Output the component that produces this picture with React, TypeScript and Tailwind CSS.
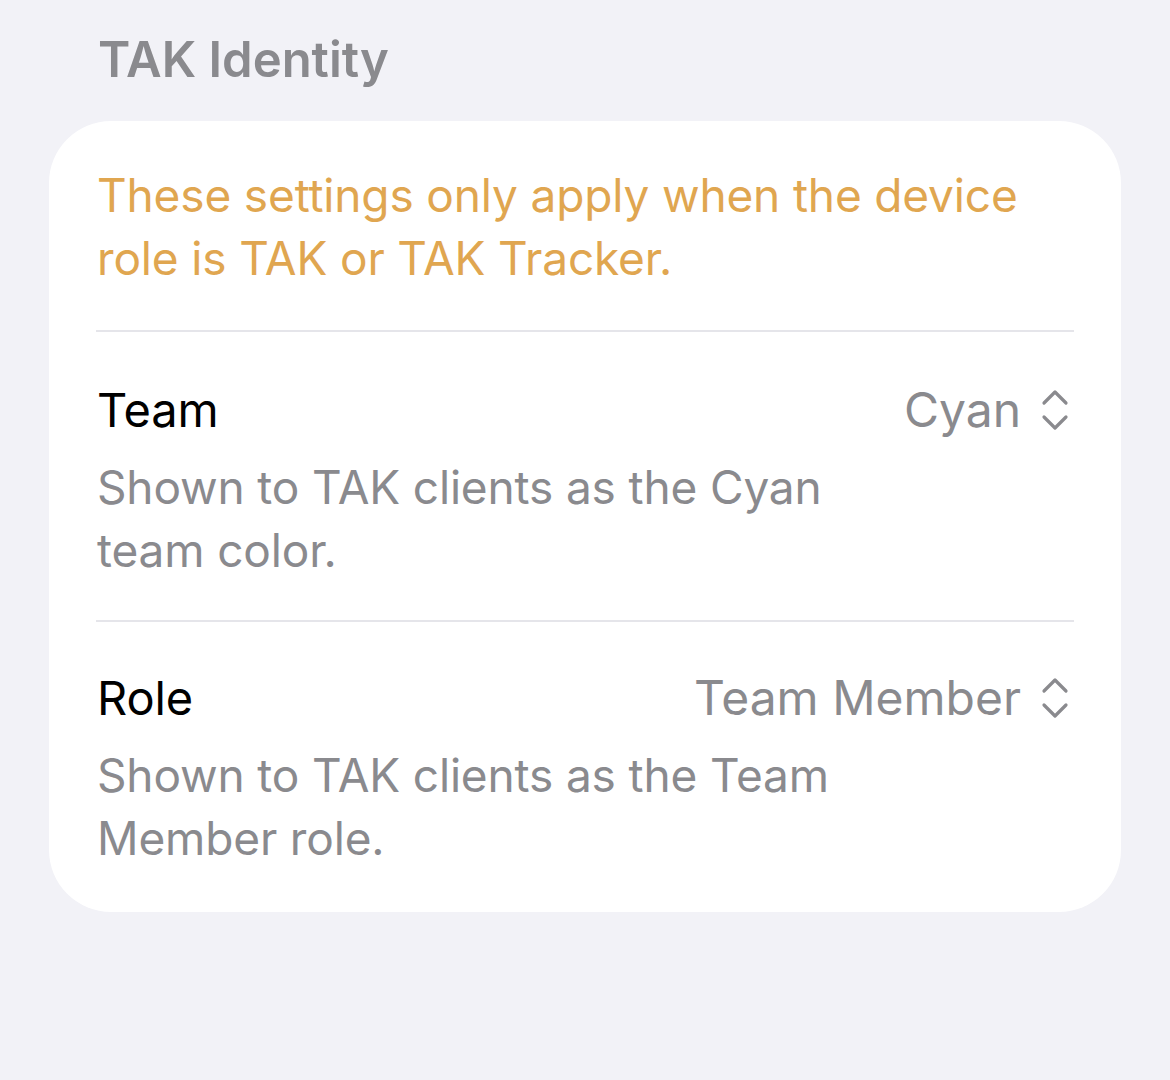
import React from "react";

function UpDown() {
  return (
    <svg width="30" height="44" viewBox="0 0 30 44" fill="none" stroke="#8a8a8e" strokeWidth="3.2" strokeLinecap="round" strokeLinejoin="round" className="ml-[19px]">
      <path d="M4 15 L15 4 L26 15" />
      <path d="M4 29 L15 40 L26 29" />
    </svg>
  );
}

function Row({ title, value, desc, pad }: { title: string; value: string; desc: string[]; pad: string }) {
  return (
    <div className={pad}>
      <div className="flex items-center justify-between h-[63px]">
        <span className="text-black text-[47px]">{title}</span>
        <div className="flex items-center text-[#8a8a8e] mr-[4px]">
          <span className="text-[48px] tracking-[0px]">{value}</span>
          <UpDown />
        </div>
      </div>
      <div className="mt-[15px] text-[#8a8a8e]">
        {desc.map((d, i) => (
          <div key={i}>{d}</div>
        ))}
      </div>
    </div>
  );
}

export default function App() {
  return (
    <div
      className="min-h-[1080px] w-[1170px] bg-[#f2f2f7] pt-[28px]"
      style={{ fontFamily: "Inter, 'Noto Sans', sans-serif" }}
    >
      <div className="pl-[98px] text-[49px] leading-[63px] font-semibold text-[#8a8a8e] tracking-[0px]">
        TAK Identity
      </div>
      <div className="mx-[49px] mt-[30px] w-[1072px] rounded-[62px] bg-white pl-[48px] pr-[47px] text-[46px] leading-[63px] tracking-[-0.15px]">
        <div className="pt-[43px] pb-[40px] text-[#e0a650]">
          <div>These settings only apply when the device</div>
          <div>role is TAK or TAK Tracker.</div>
        </div>
        <div className="h-[2px] bg-[#e5e5ea] -ml-[1px]" />
        <Row title="Team" value="Cyan" desc={["Shown to TAK clients as the Cyan", "team color."]} pad="pt-[46px] pb-[38px]" />
        <div className="h-[2px] bg-[#e5e5ea] -ml-[1px]" />
        <Row title="Role" value="Team Member" desc={["Shown to TAK clients as the Team", "Member role."]} pad="pt-[44px] pb-[42px]" />
      </div>
    </div>
  );
}
